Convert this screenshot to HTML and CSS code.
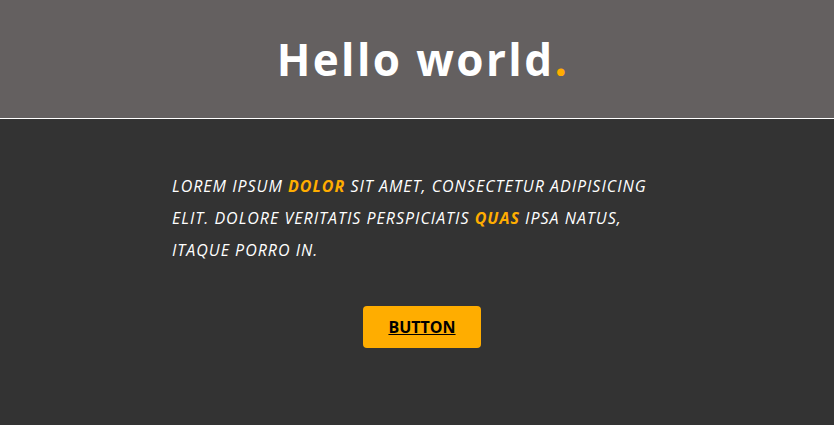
FILE: index.html
```html
<!DOCTYPE html>
<html>
<head>
<meta charset="utf-8">
<link rel="stylesheet" href="styles.css">
</head>
<body>
<header class="hero">
  <h1 class="title">Hello world<span class="accent">.</span></h1>
</header>
<main class="content">
  <p class="lead">Lorem ipsum <strong class="hl">dolor</strong> sit amet, consectetur adipisicing elit. Dolore veritatis perspiciatis <strong class="hl">quas</strong> ipsa natus, itaque porro in.</p>
  <div class="actions"><a class="btn" href="#">Button</a></div>
</main>
</body>
</html>
```
FILE: styles.css
```css
html, body { margin: 0; padding: 0; }
body {
  background: #333333;
  font-family: "Open Sans", sans-serif;
  height: 425px;
  overflow: hidden;
}
.hero {
  background: #646060;
  height: 118px;
  border-bottom: 1px solid #ffffff;
  display: flex;
  align-items: center;
  justify-content: center;
  padding-left: 12px;
}
.title {
  margin: 0;
  color: #ffffff;
  font-size: 44px;
  font-weight: 700;
  letter-spacing: 2.4px;
}
.accent { color: #ffad00; }
.content {
  width: 500px;
  margin: 0 0 0 172px;
  padding-top: 51px;
}
.lead {
  margin: 0;
  max-width: 490px;
  color: #ffffff;
  font-style: italic;
  text-transform: uppercase;
  font-size: 16px;
  line-height: 32px;
  letter-spacing: 1px;
}
.hl { color: #ffad00; font-weight: 700; }
.actions {
  display: flex;
  justify-content: center;
  margin-top: 40px;
}
.btn {
  display: block;
  width: 118px;
  height: 42px;
  line-height: 42px;
  text-align: center;
  background: #ffad00;
  border-radius: 4px;
  color: #000000;
  font-weight: 700;
  font-size: 16px;
  text-transform: uppercase;
  text-decoration: underline;
}
```
